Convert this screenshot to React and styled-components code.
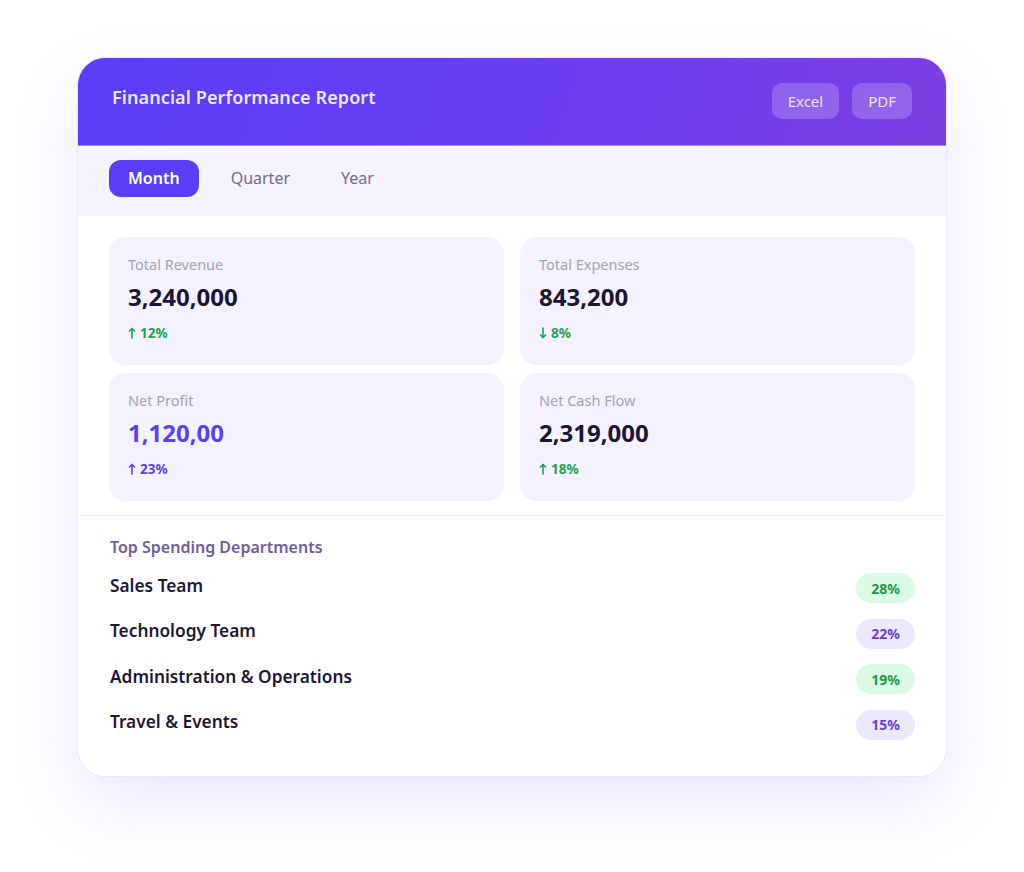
import React from 'react'
import styled, { createGlobalStyle } from 'styled-components';

const GlobalStyle = createGlobalStyle`
  * { box-sizing: border-box; }
  body {
    margin: 0;
    background: #ffffff;
    font-family: "Noto Sans", "Open Sans", sans-serif;
  }
`;

const stats = [
  { label: 'Total Revenue', value: '3,240,000', change: '12%', dir: 'up', tone: 'green' },
  { label: 'Total Expenses', value: '843,200', change: '8%', dir: 'down', tone: 'green' },
  { label: 'Net Profit', value: '1,120,00', change: '23%', dir: 'up', tone: 'purple' },
  { label: 'Net Cash Flow', value: '2,319,000', change: '18%', dir: 'up', tone: 'green' },
];

const departments = [
  { name: 'Sales Team', share: '28%', tone: 'green' },
  { name: 'Technology Team', share: '22%', tone: 'purple' },
  { name: 'Administration & Operations', share: '19%', tone: 'green' },
  { name: 'Travel & Events', share: '15%', tone: 'purple' },
];

const Arrow = ({ dir }) => (
  <svg width="8" height="12" viewBox="0 0 8 12" fill="none" stroke="currentColor" strokeWidth="1.6" strokeLinecap="round" strokeLinejoin="round">
    {dir === 'up' ? (
      <>
        <path d="M4 11V1.5" />
        <path d="M1.5 4L4 1.5L6.5 4" />
      </>
    ) : (
      <>
        <path d="M4 1V10.5" />
        <path d="M1.5 8L4 10.5L6.5 8" />
      </>
    )}
  </svg>
);

const App = () => {
  return (
    <Page>
      <GlobalStyle />
      <Card>
        <Header>
          <Title>Financial Performance Report</Title>
          <Actions>
            <ExportButton>Excel</ExportButton>
            <ExportButton>PDF</ExportButton>
          </Actions>
        </Header>

        <Tabs>
          <Tab active>Month</Tab>
          <Tab>Quarter</Tab>
          <Tab>Year</Tab>
        </Tabs>

        <StatsGrid>
          {stats.map((s) => (
            <StatCard key={s.label}>
              <StatLabel>{s.label}</StatLabel>
              <StatValue tone={s.tone === 'purple' ? 'purple' : 'dark'}>{s.value}</StatValue>
              <Change tone={s.tone}>
                <Arrow dir={s.dir} />
                {s.change}
              </Change>
            </StatCard>
          ))}
        </StatsGrid>

        <Departments>
          <SectionTitle>Top Spending Departments</SectionTitle>
          <DeptList>
            {departments.map((d) => (
              <DeptRow key={d.name}>
                <DeptName>{d.name}</DeptName>
                <Share tone={d.tone}>{d.share}</Share>
              </DeptRow>
            ))}
          </DeptList>
        </Departments>
      </Card>
    </Page>
  )
}

export default App

const Page = styled.div`
    padding: 57px 77px 96px;
`;

const Card = styled.div`
    width: 870px;
    background: #ffffff;
    border: 1px solid #ebe7fd;
    border-radius: 28px;
    overflow: hidden;
    box-shadow: 0 28px 70px rgba(100, 78, 236, 0.13);
`;

const Header = styled.div`
    height: 88px;
    display: flex;
    align-items: center;
    justify-content: space-between;
    padding: 0 34px 0 34px;
    background: linear-gradient(110deg, #5a3df6 0%, #6a3ef0 55%, #7a3fe3 100%);
    border-bottom: 1px solid #a48af6;
`;

const Title = styled.h1`
    margin: 0 0 10px;
    font-size: 18px;
    font-weight: 600;
    color: rgba(255, 255, 255, 0.9);
    letter-spacing: 0.1px;
`;

const Actions = styled.div`
    display: flex;
    gap: 13px;
    margin-bottom: 2px;
`;

const ExportButton = styled.button`
    height: 36px;
    padding: 0 16px;
    border: none;
    border-radius: 10px;
    background: rgba(255, 255, 255, 0.2);
    color: rgba(255, 255, 255, 0.85);
    font-family: inherit;
    font-size: 15px;
    cursor: pointer;
`;

const Tabs = styled.div`
    height: 70px;
    display: flex;
    align-items: center;
    gap: 13px;
    padding: 0 31px 6px;
    background: #f5f3fe;
`;

const Tab = styled.button`
    height: 37px;
    padding: 0 19px;
    border: none;
    border-radius: 12px;
    font-family: inherit;
    font-size: 16px;
    font-weight: ${(p) => (p.active ? 600 : 400)};
    background: ${(p) => (p.active ? '#5a3ef5' : 'transparent')};
    color: ${(p) => (p.active ? '#ffffff' : '#726c8e')};
    cursor: pointer;
`;

const StatsGrid = styled.div`
    display: grid;
    grid-template-columns: 1fr 1fr;
    column-gap: 16px;
    row-gap: 8px;
    padding: 21px 31px 14px;
    border-bottom: 1px solid #efedf8;
`;

const StatCard = styled.div`
    height: 128px;
    padding: 17px 19px 0;
    background: #f4f2fe;
    border-radius: 16px;
`;

const StatLabel = styled.div`
    font-size: 14.5px;
    line-height: 20px;
    color: #a6a2bb;
`;

const StatValue = styled.div`
    margin-top: 7px;
    font-size: 24px;
    line-height: 32px;
    font-weight: 700;
    color: ${(p) => (p.tone === 'purple' ? '#5a3ef5' : '#1b1535')};
`;

const Change = styled.div`
    margin-top: 10px;
    display: flex;
    align-items: center;
    gap: 4px;
    font-size: 13.5px;
    line-height: 20px;
    font-weight: 700;
    color: ${(p) => (p.tone === 'purple' ? '#5a3ef5' : '#1ea34f')};
`;

const Departments = styled.div`
    padding: 21px 31px 36px 32px;
`;

const SectionTitle = styled.h3`
    margin: 0;
    font-size: 16px;
    line-height: 20px;
    font-weight: 600;
    color: #6e5e98;
`;

const DeptList = styled.div`
    margin-top: 16px;
    display: flex;
    flex-direction: column;
    gap: 15.5px;
`;

const DeptRow = styled.div`
    display: flex;
    align-items: center;
    justify-content: space-between;
`;

const DeptName = styled.span`
    font-size: 17.3px;
    font-weight: 600;
    color: #1d1838;
    margin-bottom: 6px;
`;

const Share = styled.span`
    height: 30px;
    min-width: 59px;
    padding: 0 14px;
    display: inline-flex;
    align-items: center;
    justify-content: center;
    border-radius: 15px;
    font-size: 14px;
    font-weight: 700;
    background: ${(p) => (p.tone === 'green' ? '#dcfbe7' : '#ece8fe')};
    color: ${(p) => (p.tone === 'green' ? '#1a9a48' : '#6a3de3')};
`;
